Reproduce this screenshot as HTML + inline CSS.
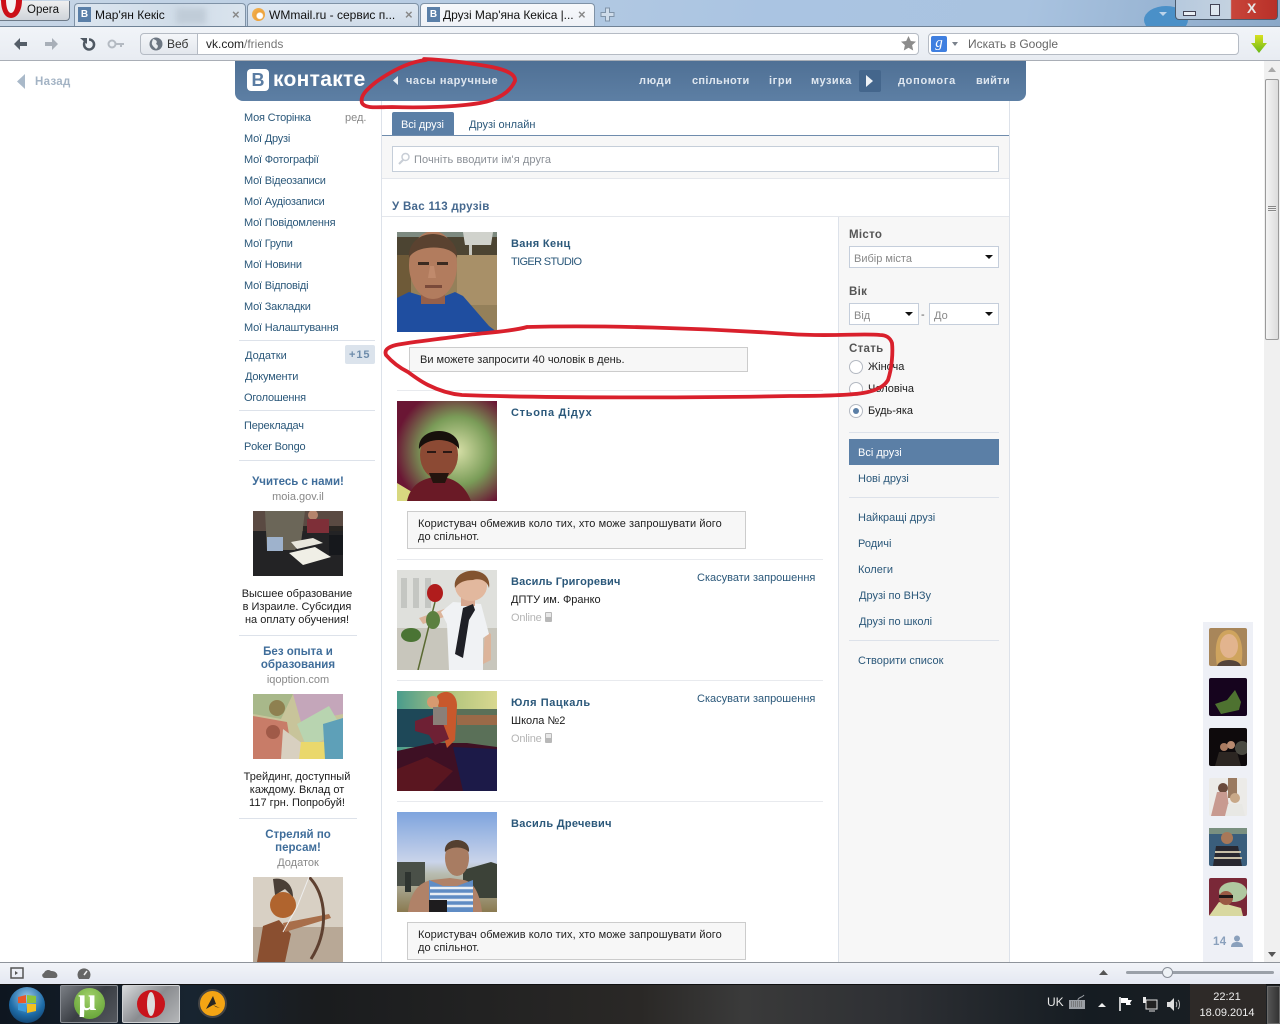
<!DOCTYPE html>
<html><head><meta charset="utf-8"><style>
html,body{margin:0;padding:0;width:1280px;height:1024px;overflow:hidden;background:#fff}
body{position:relative;font:11px "Liberation Sans","DejaVu Sans",sans-serif;color:#2b587a}
.t{position:absolute;white-space:nowrap;line-height:13px;margin-top:1px}
.a{position:absolute}
.c{text-align:center}
.b{font-weight:bold}
.m{color:#2b587a}
.l{letter-spacing:-.2px}
.k{color:#1c1c1c}
.g{color:#888}
.hd{font-weight:bold;color:#dfe7f0;font-size:11px;letter-spacing:.45px}
.nm{font-weight:bold;color:#2b587a;font-size:11px;letter-spacing:.28px}
.f{font-weight:bold;color:#555;font-size:11.5px;letter-spacing:.3px}
.sel{position:absolute;height:20px;background:#fff;border:1px solid #c5cedb;box-sizing:border-box;color:#888;padding:6px 4px 0;line-height:13px}
.sel i{position:absolute;right:5px;top:7px;border:4px solid transparent;border-top:4px solid #111;border-bottom:0}
.r{position:absolute;width:12px;height:12px;border:1px solid #b4b9c2;border-radius:50%;background:#fff}
.sep{position:absolute;height:1px;background:#dde2ea}
.msg{position:absolute;background:#f7f7f7;border:1px solid #ccc;box-sizing:border-box;color:#222;padding:6px 10px 0;line-height:13px;letter-spacing:.07px}
.ph{position:absolute;display:block}
.on{position:absolute;width:7px;height:10px;background:#b8b8b8;border-radius:1px}
.on:after{content:"";position:absolute;left:1px;top:1px;width:5px;height:4px;background:#e8e8e8}
</style></head><body>

<!-- tab strip -->
<div class="a" style="left:0;top:0;width:1280px;height:27px;background:linear-gradient(100deg,#c7d6e6 0,#b9cde3 30%,#aac4e2 60%,#a9c3e0 80%,#8aa8c8 100%)"></div>
<svg class="a" style="left:1130px;top:0" width="150" height="27"><ellipse cx="36" cy="20" rx="22" ry="14" fill="#4a90c8"/><path d="M29 12h8l-4 4z" fill="#bcd4ea"/></svg>
<div class="a" style="left:0;top:1px;width:70px;height:20px;background:linear-gradient(#f0f0f0,#cfd4da);border:1px solid #6d7a88;border-left:0;border-top:0;border-radius:0 0 4px 0;box-sizing:border-box"></div>
<svg class="a" style="left:0;top:0" width="24" height="20"><path d="M1 0h21c0 11-5 18-11 18S1 11 1 0z" fill="#cc1018"/><path d="M6 0h10c0 7-2 13-5 13S6 7 6 0z" fill="#f4f4f4"/></svg>
<!-- tabs -->
<div class="a" style="left:74px;top:3px;width:172px;height:24px;background:linear-gradient(90deg,#dce6f0,#d0dce8 60%,#dae4ee);border:1px solid #7f92a6;border-bottom:0;box-sizing:border-box;border-radius:4px 4px 0 0"></div>
<div class="a" style="left:176px;top:8px;width:30px;height:16px;background:#c0ccd8;filter:blur(3px)"></div>
<div class="a" style="left:247px;top:3px;width:172px;height:24px;background:linear-gradient(#dfe8f2,#cfdbe8);border:1px solid #7f92a6;border-bottom:0;box-sizing:border-box;border-radius:4px 4px 0 0"></div>
<div class="a" style="left:420px;top:3px;width:175px;height:25px;background:linear-gradient(#f6f8fb,#eef1f6);border:1px solid #7f92a6;border-bottom:0;box-sizing:border-box;border-radius:4px 4px 0 0"></div>
<div class="t" style="left:27px;top:3px;color:#111;font-size:11.500px">Opera</div>
<div class="a" style="left:78px;top:7px;width:13px;height:15px;background:#5a7fa8;color:#fff;font:bold 10px/15px 'Liberation Sans',sans-serif;text-align:center">B</div>
<div class="t" style="left:95px;top:8px;color:#111;font-size:12px">Мар'ян Кекіс</div>
<div class="t" style="left:232px;top:7px;color:#888;font-size:13px;font-weight:bold">×</div>
<div class="a" style="left:252px;top:8px;width:13px;height:13px;border-radius:50%;background:radial-gradient(circle at 60% 60%,#fff 0 25%,#eda23a 35%,#f3b860)"></div>
<div class="t" style="left:269px;top:8px;color:#111;font-size:12px">WMmail.ru - сервис п...</div>
<div class="t" style="left:405px;top:7px;color:#888;font-size:13px;font-weight:bold">×</div>
<div class="a" style="left:427px;top:7px;width:13px;height:15px;background:#5a7fa8;color:#fff;font:bold 10px/15px 'Liberation Sans',sans-serif;text-align:center">B</div>
<div class="t" style="left:443px;top:8px;color:#111;font-size:12px;letter-spacing:-.05px">Друзі Мар'яна Кекіса |...</div>
<div class="t" style="left:578px;top:7px;color:#888;font-size:13px;font-weight:bold">×</div>
<svg class="a" style="left:600px;top:7px" width="15" height="15"><path d="M5.500 1h4v4.500h4.500v4H9.500V14h-4V9.500H1v-4h4.500z" fill="#cfdcea" stroke="#7f93a8"/></svg>
<!-- window buttons -->
<div class="a" style="left:1175px;top:0;width:103px;height:20px;border:1px solid #4a5a6c;border-top:0;box-sizing:border-box;border-radius:0 0 4px 4px;background:linear-gradient(90deg,#b6c9de 0,#c4d2e0 54%,#c8453a 55%,#b83028 100%)"></div>
<div class="a" style="left:1183px;top:11px;width:11px;height:3px;background:#e8eef4;border:1px solid #445"></div>
<div class="a" style="left:1210px;top:4px;width:8px;height:10px;background:#dfe7ef;border:1px solid #445"></div>
<div class="t b" style="left:1247px;top:1px;color:#e6e6e6;font-size:14px">X</div>

<!-- toolbar -->
<div class="a" style="left:0;top:26px;width:1280px;height:1px;background:#6f8296"></div>
<div class="a" style="left:0;top:27px;width:1280px;height:33px;background:linear-gradient(#f1f4f8,#e8ecf2)"></div>
<div class="a" style="left:0;top:60px;width:1280px;height:1px;background:#a9aeb6"></div>
<svg class="a" style="left:10px;top:35px" width="120" height="18">
<path d="M4 9l6-6v4h7v4h-7v4z" fill="#555e68"/>
<path d="M48 9l-6-6v4h-7v4h7v4z" fill="#a8afb8"/>
<path d="M79 4.500a5 5 0 1 1-3.500 1.500" fill="none" stroke="#4f5862" stroke-width="2.500"/><path d="M70 3h7v6z" fill="#4f5862"/>
<circle cx="102" cy="9" r="3.500" fill="none" stroke="#b4bac2" stroke-width="2"/><path d="M105 8h9v2h-2v2h-2v-2h-5z" fill="#b4bac2"/>
</svg>
<div class="a" style="left:140px;top:33px;width:58px;height:22px;background:linear-gradient(#f4f6f9,#e3e7ed);border:1px solid #b5bbc4;box-sizing:border-box;border-radius:4px 0 0 4px"></div>
<div class="a" style="left:198px;top:33px;width:721px;height:22px;background:#fff;border:1px solid #b5bbc4;border-left:0;box-sizing:border-box;border-radius:0 4px 4px 0"></div>
<svg class="a" style="left:149px;top:37px" width="14" height="14"><circle cx="7" cy="7" r="6.500" fill="#6c7682"/><path d="M4 2c3 1 5 2 3 5 3 1 2 4 0 5-2-2-5-4-4-7z" fill="#e8ecf0"/></svg>
<div class="t" style="left:167px;top:37px;color:#333;font-size:12px">Веб</div>
<div class="t" style="left:206px;top:37px;color:#222;font-size:12px">vk.com<span style="color:#777">/friends</span></div>
<svg class="a" style="left:900px;top:35px" width="17" height="17"><path d="M8.500 1l2.300 5 5.200.6-3.900 3.500 1.100 5.400-4.700-2.700-4.700 2.700 1.100-5.400L1 6.600 6.200 6z" fill="#8c8c8c"/></svg>
<div class="a" style="left:928px;top:33px;width:311px;height:22px;background:#fff;border:1px solid #b5bbc4;box-sizing:border-box;border-radius:4px"></div>
<div class="a" style="left:931px;top:36px;width:16px;height:16px;background:#3f7fe0;border-radius:2px;color:#fff;font:italic 15px/15px 'Liberation Serif',serif;text-align:center">g</div>
<div class="a" style="left:952px;top:42px;border:3.500px solid transparent;border-top:4px solid #7a828c;border-bottom:0"></div>
<div class="t" style="left:968px;top:37px;color:#666;font-size:12px">Искать в Google</div>
<svg class="a" style="left:1250px;top:35px" width="18" height="19"><defs><linearGradient id="dg" x1="0" y1="0" x2="0" y2="1"><stop offset="0" stop-color="#d8e020"/><stop offset="1" stop-color="#68b818"/></linearGradient></defs><path d="M5 0h8v8h4l-8 10L1 8h4z" fill="url(#dg)"/></svg>

<!-- Back -->
<svg class="a" style="left:17px;top:74px" width="9" height="15"><path d="M8 0v15L0 7.500z" fill="#a9b9c9"/></svg>
<div class="t b" style="left:35px;top:75px;color:#a3b3c4;font-size:11.500px;letter-spacing:.3px">Назад</div>

<!-- VK header -->
<div class="a" style="left:235px;top:61px;width:791px;height:40px;background:linear-gradient(#4f7095,#5d7fa4);border-radius:0 0 8px 8px"></div>
<div class="a" style="left:247px;top:69px;width:22px;height:22px;background:#fff;border-radius:4px;color:#5b7da3;font:bold 18px/22px 'Liberation Sans',sans-serif;text-align:center">В</div>
<div class="t b" style="left:273px;top:68px;color:#fff;font-size:21px;line-height:22px;letter-spacing:.3px">контакте</div>
<svg class="a" style="left:393px;top:76px" width="6" height="9"><path d="M5 0v9L0 4.500z" fill="#e8eef4"/></svg>
<div class="t hd" style="left:406px;top:74px;letter-spacing:.55px">часы наручные</div>
<div class="t hd" style="left:639px;top:74px;letter-spacing:.7px">люди</div>
<div class="t hd" style="left:692px;top:74px;letter-spacing:.3px">спільноти</div>
<div class="t hd" style="left:769px;top:74px;letter-spacing:.6px">ігри</div>
<div class="t hd" style="left:811px;top:74px;letter-spacing:.5px">музика</div>
<div class="a" style="left:859px;top:70px;width:22px;height:22px;background:#44668c;border-radius:2px"></div>
<svg class="a" style="left:866px;top:75px" width="8" height="12"><path d="M0 0l7 6-7 6z" fill="#eef2f6"/></svg>
<div class="t hd" style="left:898px;top:74px;letter-spacing:.7px">допомога</div>
<div class="t hd" style="left:976px;top:74px;letter-spacing:.3px">вийти</div>

<!-- left menu -->
<div class="t m l" style="left:244px;top:111px">Моя Сторінка</div>
<div class="t g" style="left:345px;top:111px">ред.</div>
<div class="t m l" style="left:244px;top:132px">Мої Друзі</div>
<div class="t m l" style="left:244px;top:153px">Мої Фотографії</div>
<div class="t m l" style="left:244px;top:174px">Мої Відеозаписи</div>
<div class="t m l" style="left:244px;top:195px">Мої Аудіозаписи</div>
<div class="t m l" style="left:244px;top:216px">Мої Повідомлення</div>
<div class="t m l" style="left:244px;top:237px">Мої Групи</div>
<div class="t m l" style="left:244px;top:258px">Мої Новини</div>
<div class="t m l" style="left:244px;top:279px">Мої Відповіді</div>
<div class="t m l" style="left:244px;top:300px">Мої Закладки</div>
<div class="t m l" style="left:244px;top:321px">Мої Налаштування</div>
<div class="sep" style="left:239px;top:340px;width:136px"></div>
<div class="t m" style="left:245px;top:349px">Додатки</div>
<div class="a" style="left:345px;top:345px;width:30px;height:19px;background:#dbe3ec;border-radius:2px"></div>
<div class="t b" style="left:349px;top:348px;color:#6e8cab;font-size:11px;letter-spacing:.9px">+15</div>
<div class="t m l" style="left:245px;top:370px">Документи</div>
<div class="t m l" style="left:244px;top:391px">Оголошення</div>
<div class="sep" style="left:239px;top:410px;width:136px"></div>
<div class="t m l" style="left:244px;top:419px">Перекладач</div>
<div class="t m l" style="left:244px;top:440px">Poker Bongo</div>
<div class="sep" style="left:239px;top:460px;width:136px"></div>

<!-- ads -->
<div class="t c b" style="left:239px;top:475px;width:118px;color:#3f6d9a;font-size:11.500px">Учитесь с нами!</div>
<div class="t c g" style="left:239px;top:490px;width:118px">moia.gov.il</div>
<svg class="ph" style="left:253px;top:511px" width="90" height="65"><rect width="90" height="65" fill="#232325"/><rect width="90" height="20" fill="#5a4a42"/><rect x="50" y="15" width="40" height="5" fill="#2a2622"/><path d="M12 0h40l-4 32-6 7H14z" fill="#6b6658"/><rect x="14" y="26" width="16" height="14" fill="#9eb2cc"/><circle cx="60" cy="4" r="5" fill="#b5846c"/><rect x="54" y="8" width="22" height="14" fill="#7e2f38"/><path d="M38 31l22-4 10 5-26 6z" fill="#e8e6dc"/><path d="M36 42l26-6 16 10-28 8z" fill="#f0efe6"/><rect x="76" y="24" width="14" height="20" fill="#16181c"/></svg>
<div class="t c k" style="left:235px;top:587px;width:124px">Высшее образование<br>в Израиле. Субсидия<br>на оплату обучения!</div>
<div class="sep" style="left:239px;top:635px;width:118px"></div>
<div class="t c b" style="left:239px;top:645px;width:118px;color:#3f6d9a;font-size:11.500px">Без опыта и<br>образования</div>
<div class="t c g" style="left:239px;top:673px;width:118px">iqoption.com</div>
<svg class="ph" style="left:253px;top:694px" width="90" height="65"><rect width="90" height="65" fill="#c8c49a"/><path d="M0 0h40L28 25 0 20z" fill="#a8b88a"/><path d="M0 22l34 6 6 37H0z" fill="#c87c68"/><path d="M40 0h50v20L48 28z" fill="#c4a6ba"/><path d="M44 30l32-18 14 24-36 18z" fill="#b8d4b0"/><path d="M30 35l24 18-8 12H28z" fill="#d8d0c0"/><path d="M48 48h26l-2 17H46z" fill="#ead86c"/><path d="M70 30l20-6v41H72z" fill="#5ea0b8"/><circle cx="24" cy="14" r="8" fill="#8e8050"/><circle cx="20" cy="38" r="7" fill="#a05a48"/></svg>
<div class="t c k" style="left:235px;top:770px;width:124px">Трейдинг, доступный<br>каждому. Вклад от<br>117 грн. Попробуй!</div>
<div class="sep" style="left:239px;top:818px;width:118px"></div>
<div class="t c b" style="left:239px;top:828px;width:118px;color:#3f6d9a;font-size:11.500px">Стреляй по<br>персам!</div>
<div class="t c g" style="left:239px;top:856px;width:118px">Додаток</div>
<svg class="ph" style="left:253px;top:877px" width="90" height="85"><rect width="90" height="85" fill="#d8d0c4"/><rect y="50" width="90" height="35" fill="#b8a896"/><path d="M4 85l6-36 16-6 12 14-6 28z" fill="#8a4f30"/><circle cx="30" cy="28" r="13" fill="#b0642e"/><path d="M20 2c10-2 20 4 20 18l-8-8-10 6z" fill="#4a3f36"/><path d="M30 46l46-9 2 4-46 14z" fill="#a86e4a"/><path d="M56 0c18 18 20 54 2 82" fill="none" stroke="#5e4030" stroke-width="3"/><path d="M56 0L44 30 30 55" stroke="#eee" fill="none"/></svg>

<!-- divider of center -->
<div class="a" style="left:381px;top:101px;width:1px;height:861px;background:#dde2ea"></div>
<div class="a" style="left:1009px;top:101px;width:1px;height:861px;background:#dde2ea"></div>

<!-- tabs -->
<div class="a" style="left:392px;top:112px;width:62px;height:23px;background:#5b7fa6;border-radius:2px 2px 0 0"></div>
<div class="t" style="left:401px;top:118px;color:#fff;letter-spacing:-.1px">Всі друзі</div>
<div class="t m" style="left:469px;top:118px">Друзі онлайн</div>
<div class="a" style="left:382px;top:135px;width:627px;height:1px;background:#6f8cad"></div>
<div class="a" style="left:382px;top:136px;width:627px;height:42px;background:#f7f7f7"></div>
<div class="a" style="left:392px;top:146px;width:607px;height:26px;background:#fff;border:1px solid #c5ced9;box-sizing:border-box"></div>
<svg class="a" style="left:398px;top:152px" width="12" height="13"><circle cx="7.500" cy="5" r="3.500" fill="none" stroke="#c8ced6" stroke-width="1.500"/><path d="M5 8l-4 4" stroke="#c8ced6" stroke-width="2"/></svg>
<div class="t" style="left:414px;top:153px;color:#8a8f96;letter-spacing:.08px">Почніть вводити ім'я друга</div>
<div class="a" style="left:382px;top:178px;width:627px;height:1px;background:#e4e7ec"></div>
<div class="t b" style="left:392px;top:200px;color:#45688e;font-size:11.500px;letter-spacing:.3px">У Вас 113 друзів</div>
<div class="a" style="left:382px;top:216px;width:627px;height:1px;background:#e4e7ec"></div>

<!-- filter column -->
<div class="a" style="left:838px;top:217px;width:171px;height:745px;background:#f7f7f7;border-left:1px solid #dde2ea;box-sizing:border-box"></div>
<div class="t f" style="left:849px;top:228px">Місто</div>
<div class="sel" style="left:849px;top:246px;width:150px;height:22px">Вибір міста<i style="top:8px"></i></div>
<div class="t f" style="left:849px;top:285px">Вік</div>
<div class="sel" style="left:849px;top:303px;width:70px;height:22px">Від<i style="top:8px"></i></div>
<div class="t" style="left:921px;top:308px;color:#555">-</div>
<div class="sel" style="left:929px;top:303px;width:70px;height:22px">До<i style="top:8px"></i></div>
<div class="t f" style="left:849px;top:342px">Стать</div>
<div class="r" style="left:849px;top:360px"></div>
<div class="t k" style="left:868px;top:360px">Жіноча</div>
<div class="r" style="left:849px;top:382px"></div>
<div class="t k" style="left:868px;top:382px">Чоловіча</div>
<div class="r" style="left:849px;top:404px"></div>
<div class="a" style="left:853px;top:408px;width:6px;height:6px;border-radius:50%;background:#5b7fa6"></div>
<div class="t k" style="left:868px;top:404px">Будь-яка</div>
<div class="sep" style="left:849px;top:432px;width:150px"></div>
<div class="a" style="left:849px;top:439px;width:150px;height:26px;background:#5b7fa6"></div>
<div class="t" style="left:858px;top:446px;color:#fff">Всі друзі</div>
<div class="t m" style="left:858px;top:472px">Нові друзі</div>
<div class="sep" style="left:849px;top:497px;width:150px"></div>
<div class="t m" style="left:858px;top:511px">Найкращі друзі</div>
<div class="t m" style="left:858px;top:537px">Родичі</div>
<div class="t m" style="left:858px;top:563px">Колеги</div>
<div class="t m" style="left:859px;top:589px">Друзі по ВНЗу</div>
<div class="t m" style="left:859px;top:615px">Друзі по школі</div>
<div class="sep" style="left:849px;top:640px;width:150px"></div>
<div class="t m" style="left:858px;top:654px">Створити список</div>

<!-- friend 1 -->
<svg class="ph" style="left:397px;top:232px" width="100" height="100"><rect width="100" height="100" fill="#94805a"/><rect width="100" height="5" fill="#7d8a80"/><rect y="5" width="100" height="18" fill="#4c4432"/><path d="M66 0h30l-2 13H68z" fill="#d0d2cc"/><rect x="72" y="13" width="3" height="12" fill="#c8c8c0"/><rect y="23" x="60" width="40" height="50" fill="#a89068"/><rect x="0" y="23" width="14" height="45" fill="#6e5a38"/><path d="M0 66l12-6 26 8 20-8 8 4 26 30 8 6H0z" fill="#1f4ea0"/><rect x="24" y="58" width="24" height="14" fill="#96604a"/><ellipse cx="36" cy="33" rx="24" ry="34" fill="#b27c5e"/><path d="M12 26C10 -6 62 -6 60 26 56 12 18 12 12 26z" fill="#5a4230"/><rect x="21" y="30" width="11" height="3" fill="#3a2a20"/><rect x="40" y="30" width="11" height="3" fill="#3a2a20"/><path d="M33 34l-2 12h8l-2-12z" fill="#c08a6c"/><rect x="28" y="53" width="17" height="3" fill="#7a4a3a"/></svg>
<div class="t nm" style="left:511px;top:237px;letter-spacing:.35px">Ваня Кенц</div>
<div class="t m" style="left:511px;top:255px;letter-spacing:-.65px">TIGER STUDIO</div>
<div class="msg" style="left:409px;top:347px;width:339px;height:25px;letter-spacing:0">Ви можете запросити 40 чоловік в день.</div>
<div class="sep" style="left:397px;top:390px;width:426px;background:#e8eaee"></div>

<!-- friend 2 -->
<svg class="ph" style="left:397px;top:401px" width="100" height="100"><defs><radialGradient id="f2" cx=".6" cy=".5" r=".62"><stop offset="0" stop-color="#d8e0a8"/><stop offset=".55" stop-color="#7a9c58"/><stop offset="1" stop-color="#6a1634"/></radialGradient></defs><rect width="100" height="100" fill="url(#f2)"/><path d="M0 82l30 18H0z" fill="#d8d880"/><ellipse cx="42" cy="54" rx="19" ry="24" fill="#8c4a34"/><path d="M22 48C20 24 64 24 62 48 54 36 30 36 22 48z" fill="#17100c"/><rect x="30" y="50" width="9" height="2" fill="#2a1814"/><rect x="46" y="50" width="9" height="2" fill="#2a1814"/><path d="M10 100c4-18 18-24 32-24s26 8 32 24z" fill="#6a1a26"/><path d="M32 72h20l-4 10h-12z" fill="#24140e"/></svg>
<div class="t nm" style="left:511px;top:406px;letter-spacing:.7px">Стьопа Дідух</div>
<div class="msg" style="left:407px;top:511px;width:339px;height:38px">Користувач обмежив коло тих, хто може запрошувати його<br>до спільнот.</div>
<div class="sep" style="left:397px;top:559px;width:426px;background:#e8eaee"></div>

<!-- friend 3 -->
<svg class="ph" style="left:397px;top:570px" width="100" height="100"><rect width="100" height="100" fill="#dfe0dc"/><path d="M4 8h6v30H4zM16 8h6v30h-6zM28 8h6v30h-6z" fill="#c4c6c2"/><rect y="58" width="100" height="42" fill="#c8c6bc"/><path d="M88 60l6 4 0 26-8 4z" fill="#dcb49a"/><path d="M22 48l28-10 0 8-24 8z" fill="#dcb49a"/><path d="M56 32l28 2 8 30-6 4 0 32H52l-2-46-6-12z" fill="#f0f2f4"/><rect x="64" y="24" width="14" height="12" fill="#d8a890"/><ellipse cx="74" cy="16" rx="16" ry="15" fill="#e2b89e"/><path d="M58 18C54-4 96-6 92 18c-2-8-10-10-16-8-8 0-14 2-18 8z" fill="#82532f"/><path d="M66 38l10-4 2 6-6 10-6 38-8-4z" fill="#1f2026"/><ellipse cx="38" cy="23" rx="8" ry="9" fill="#b01c1c"/><path d="M38 32L21 100" stroke="#5a6a32" stroke-width="1.500"/><ellipse cx="14" cy="65" rx="10" ry="7" fill="#4a7434"/><ellipse cx="36" cy="50" rx="7" ry="9" fill="#5c8040"/></svg>
<div class="t nm" style="left:511px;top:575px;letter-spacing:.15px">Василь Григоревич</div>
<div class="t k" style="left:511px;top:593px">ДПТУ им. Франко</div>
<div class="t" style="left:511px;top:611px;color:#b5b5b5;letter-spacing:-.2px">Online</div>
<div class="on" style="left:545px;top:612px"></div>
<div class="t m" style="left:697px;top:571px">Скасувати запрошення</div>
<div class="sep" style="left:397px;top:680px;width:426px;background:#e8eaee"></div>

<!-- friend 4 -->
<svg class="ph" style="left:397px;top:691px" width="100" height="100"><defs><linearGradient id="f4" x1="0" y1="0" x2="1" y2="0"><stop offset="0" stop-color="#4a9c8c"/><stop offset=".6" stop-color="#b8c880"/><stop offset="1" stop-color="#d8d890"/></linearGradient></defs><rect width="100" height="100" fill="url(#f4)"/><path d="M0 18h100v38H0z" fill="#5a7058"/><path d="M0 18h40v38H0z" fill="#1e4858"/><path d="M60 24h40v10H60z" fill="#9a6a48"/><path d="M0 60l36-8h34l30 4v44H0z" fill="#3e1024"/><path d="M56 56l44 2v42H66z" fill="#1c1a48"/><path d="M0 78l30-12 26 14-20 20H0z" fill="#5a1620"/><path d="M40 5c8-8 20-4 20 10l-2 34-8 8-6-20z" fill="#c8582c"/><path d="M18 30l24-8 10 26-14 6-6-10-14-4z" fill="#6e2034"/><circle cx="36" cy="11" r="6" fill="#d89a70"/><rect x="36" y="16" width="14" height="18" fill="#8a7f78"/></svg>
<div class="t nm" style="left:511px;top:696px;letter-spacing:.55px">Юля Пацкаль</div>
<div class="t k" style="left:511px;top:714px">Школа №2</div>
<div class="t" style="left:511px;top:732px;color:#b5b5b5;letter-spacing:-.2px">Online</div>
<div class="on" style="left:545px;top:733px"></div>
<div class="t m" style="left:697px;top:692px">Скасувати запрошення</div>
<div class="sep" style="left:397px;top:801px;width:426px;background:#e8eaee"></div>

<!-- friend 5 -->
<svg class="ph" style="left:397px;top:812px" width="100" height="100"><defs><linearGradient id="f5" x1="0" y1="0" x2="0" y2="1"><stop offset="0" stop-color="#7ea4de"/><stop offset=".5" stop-color="#cad4ea"/><stop offset=".62" stop-color="#b8bcb0"/><stop offset="1" stop-color="#8a7a50"/></linearGradient></defs><rect width="100" height="100" fill="url(#f5)"/><rect x="0" y="50" width="28" height="24" fill="#4a5048"/><path d="M66 58l28-8 6 2v34H66z" fill="#3c4238"/><rect x="8" y="60" width="6" height="20" fill="#2e3430"/><ellipse cx="60" cy="46" rx="12" ry="18" fill="#a87c62"/><path d="M48 40c-2-16 26-16 24 0-6-6-18-6-24 0z" fill="#544030"/><path d="M11 100c2-18 10-30 24-32l18-2 14 2c10 2 16 14 18 32z" fill="#b08268"/><path d="M32 100V68l14 6h14l16-6v32z" fill="#5f8cc4"/><path d="M33 76h43M33 82h43M33 88h43M33 94h43" stroke="#e8eef4" stroke-width="2.500"/><rect x="32" y="88" width="18" height="12" fill="#1e1c1e"/></svg>
<div class="t nm" style="left:511px;top:817px">Василь Дречевич</div>
<div class="msg" style="left:407px;top:922px;width:339px;height:38px">Користувач обмежив коло тих, хто може запрошувати його<br>до спільнот.</div>

<!-- right chat bar -->
<div class="a" style="left:1203px;top:622px;width:50px;height:340px;background:#eef0f6"></div>
<svg class="a" style="left:1209px;top:628px" width="38" height="38"><rect width="38" height="38" rx="2" fill="#a8865a"/><path d="M8 38C4 14 10 2 20 2s16 14 12 36z" fill="#cfa45e"/><ellipse cx="20" cy="18" rx="9" ry="12" fill="#e2b48e"/><path d="M8 38c2-8 22-8 24 0z" fill="#54443a"/></svg>
<svg class="a" style="left:1209px;top:678px" width="38" height="38"><rect width="38" height="38" rx="2" fill="#16041e"/><path d="M6 26l12-4 8-10 6 12-2 8-18 4z" fill="#4e7230"/></svg>
<svg class="a" style="left:1209px;top:728px" width="38" height="38"><rect width="38" height="38" rx="2" fill="#0e0a0c"/><circle cx="15" cy="19" r="4" fill="#a87a60"/><circle cx="22" cy="17" r="4" fill="#b88a70"/><path d="M6 38l4-14 18 0 4 14z" fill="#2c2622"/><circle cx="33" cy="20" r="7" fill="#4a4a42"/></svg>
<svg class="a" style="left:1209px;top:778px" width="38" height="38"><rect width="38" height="38" rx="2" fill="#ecebe8"/><rect x="19" width="9" height="20" fill="#9a7a60"/><circle cx="14" cy="10" r="5" fill="#6a4a3c"/><path d="M2 38l6-24 10 0 3 24z" fill="#c89a90"/><circle cx="26" cy="20" r="5" fill="#c8a888"/><path d="M16 38l3-12h14l3 12z" fill="#e8e8e4"/></svg>
<svg class="a" style="left:1209px;top:828px" width="38" height="38"><rect width="38" height="38" rx="2" fill="#3a5e7c"/><rect width="38" height="6" fill="#7a9080"/><circle cx="18" cy="10" r="6" fill="#a87858"/><path d="M4 38l3-20 22 0 4 20z" fill="#282830"/><path d="M6 24h26M5 30h28" stroke="#c8c0a8" stroke-width="2"/></svg>
<svg class="a" style="left:1209px;top:878px" width="38" height="38"><rect width="38" height="38" rx="2" fill="#7a2838"/><ellipse cx="24" cy="14" rx="14" ry="10" fill="#b0c8a0"/><path d="M0 38l10-14 22 6 2 8z" fill="#d8d8a0"/><circle cx="17" cy="20" r="7" fill="#9a5a44"/><rect x="10" y="17" width="14" height="3" fill="#201818"/></svg>
<div class="t b" style="left:1213px;top:935px;color:#8aa0bc;font-size:11.500px;letter-spacing:.3px">14</div>
<svg class="a" style="left:1231px;top:935px" width="12" height="12"><circle cx="6" cy="3.500" r="3" fill="#8aa0bc"/><path d="M0 12c0-4 3-5 6-5s6 1 6 5z" fill="#8aa0bc"/></svg>

<!-- scrollbar -->
<div class="a" style="left:1264px;top:61px;width:16px;height:901px;background:#f0f0f0"></div>
<svg class="a" style="left:1267px;top:66px" width="10" height="8"><path d="M5 1l4 5H1z" fill="#a8a8a8"/></svg>
<div class="a" style="left:1265px;top:79px;width:14px;height:261px;background:linear-gradient(90deg,#f4f4f4,#dcdcdc);border:1px solid #9a9a9a;box-sizing:border-box;border-radius:2px"></div>
<div class="a" style="left:1268px;top:206px;width:8px;height:6px;background:repeating-linear-gradient(#888 0 1px,#eee 1px 2px)"></div>
<svg class="a" style="left:1267px;top:950px" width="10" height="8"><path d="M5 7l4-5H1z" fill="#555"/></svg>

<!-- status bar -->
<div class="a" style="left:0;top:962px;width:1280px;height:1px;background:#8f949b"></div>
<div class="a" style="left:0;top:963px;width:1280px;height:21px;background:linear-gradient(#f2f4f8,#e4e8f2)"></div>
<svg class="a" style="left:10px;top:966px" width="90" height="15">
<rect x="1" y="2" width="12" height="10" fill="none" stroke="#555" stroke-width="1.500"/><path d="M5 5l3 2-3 2z" fill="#555"/>
<path d="M35 12c-3 0-4-4-1-5 1-3 5-4 7-2 3 0 5 1 6 3 1 2 0 4-2 4z" fill="#666"/>
<path d="M69 13a6.500 6.500 0 1 1 10 0z" fill="#666"/><path d="M74 9l3-4" stroke="#eee" stroke-width="1.500"/>
</svg>
<svg class="a" style="left:1098px;top:969px" width="12" height="8"><path d="M1 6h9L5.500 1z" fill="#555"/></svg>
<div class="a" style="left:1126px;top:971px;width:148px;height:3px;background:#9aa0a8;border-radius:2px"></div>
<div class="a" style="left:1162px;top:967px;width:9px;height:9px;border-radius:50%;background:#eef2f6;border:1px solid #8a8f98"></div>

<!-- taskbar -->
<div class="a" style="left:0;top:984px;width:1280px;height:40px;background:linear-gradient(90deg,#0e1620 0,#182430 15%,#1a1c1e 25%,#2a2826 50%,#3a3a3a 58%,#2e3034 70%,#151c22 85%,#1c2024 100%)"></div>
<div class="a" style="left:0;top:984px;width:1280px;height:1px;background:#111"></div>
<div class="a" style="left:9px;top:987px;width:36px;height:36px;border-radius:50%;background:radial-gradient(circle at 50% 30%,#9cc8e8,#1e6ca8 55%,#0c2c50)"></div>
<svg class="a" style="left:17px;top:994px" width="20" height="20"><path d="M1 3l8-2v8H1z" fill="#e8582a"/><path d="M10 1l9 1v7h-9z" fill="#8cc43c"/><path d="M1 10h8v8l-8-2z" fill="#3c9cdc"/><path d="M10 10h9v7l-9 2z" fill="#f4c020"/></svg>
<div class="a" style="left:60px;top:985px;width:58px;height:38px;background:linear-gradient(135deg,#7a7e84,#3a3e44 50%,#54585e);border:1px solid #8a8e94;box-sizing:border-box;border-radius:2px"></div>
<div class="a" style="left:74px;top:988px;width:31px;height:31px;border-radius:50%;background:radial-gradient(circle at 50% 30%,#a0d068,#5c9c30)"></div>
<div class="t b" style="left:78px;top:983px;color:#fff;font:bold 32px/30px 'Liberation Serif',serif">µ</div>
<div class="a" style="left:122px;top:985px;width:58px;height:38px;background:linear-gradient(135deg,#d8dadc,#8a8c90 50%,#b4b6b8);border:1px solid #d0d2d4;box-sizing:border-box;border-radius:2px"></div>
<div class="a" style="left:137px;top:990px;width:28px;height:28px;border-radius:50%;background:#c8141c"></div>
<div class="a" style="left:147px;top:992px;width:8px;height:24px;border-radius:50%;background:#ddd"></div>
<div class="a" style="left:198px;top:989px;width:29px;height:29px;border-radius:50%;background:#f4a414;border:2px solid #444;box-sizing:border-box"></div>
<svg class="a" style="left:204px;top:994px" width="18" height="18"><path d="M9 2L2 15l7-4 7 3-4-1-3-2 3-1z" fill="#2a2620"/></svg>
<div class="t" style="left:1047px;top:995px;color:#e8e8e8;font-size:12px">UK</div>
<svg class="a" style="left:1068px;top:994px" width="18" height="16"><rect x="1" y="6" width="16" height="9" fill="#9a9ea4"/><path d="M3 8h12M3 10h12M3 12h12" stroke="#555" stroke-width="1" stroke-dasharray="1 1"/><path d="M10 6c0-3 4-2 6-5" stroke="#9a9ea4" fill="none"/></svg>
<svg class="a" style="left:1097px;top:1002px" width="10" height="6"><path d="M1 5h8L5 1z" fill="#eee"/></svg>
<svg class="a" style="left:1118px;top:996px" width="16" height="16"><path d="M2 1v14" stroke="#fff" stroke-width="1.500"/><path d="M3 2h7v2h4l-2 3 1 2H8V7H3z" fill="#fff"/></svg>
<svg class="a" style="left:1142px;top:996px" width="16" height="16"><rect x="4" y="4" width="11" height="9" fill="#222" stroke="#e0e0e0"/><rect x="1" y="1" width="3" height="6" fill="#e8e8e8"/><path d="M7 15h6" stroke="#e0e0e0"/></svg>
<svg class="a" style="left:1166px;top:997px" width="16" height="15"><path d="M1 5h3l4-4v13l-4-4H1z" fill="#dedede"/><path d="M10 5c1 1 1 4 0 5M12 3c2 2 2 7 0 9" stroke="#bbb" fill="none"/></svg>
<div class="a" style="left:1190px;top:984px;width:76px;height:40px;background:#2e2a28"></div>
<div class="t c" style="left:1190px;top:990px;width:74px;color:#eee;font-size:11px">22:21</div>
<div class="t c" style="left:1190px;top:1006px;width:74px;color:#eee;font-size:11px">18.09.2014</div>
<div class="a" style="left:1267px;top:986px;width:13px;height:38px;background:linear-gradient(90deg,#555,#333);border:1px solid #6a6a6a;box-sizing:border-box"></div>

<!-- red annotations -->
<svg class="a" style="left:0;top:0;pointer-events:none" width="1280" height="1024">
<path d="M426 60C408 62 390 72 376 82C366 90 360 96 362 103C365 109 378 107 392 107C420 108 456 107 480 103C498 100 510 92 515 81C516 74 506 70 492 67C470 63 448 60 424 59" fill="none" stroke="#d9202c" stroke-width="3.800" stroke-linecap="round"/>
<path d="M527 327C510 332 480 333 468 335C440 339 410 342 396 345C388 347 384 350 386 355C392 362 400 368 408 372C416 378 422 382 428 385C440 391 450 394 462 395C540 398 700 398 790 396C820 396 850 395 863 393C875 391 884 387 888 380C892 368 893 352 892 343C890 337 885 335 880 335C860 333 830 337 790 334C700 328 600 325 527 327" fill="none" stroke="#d9202c" stroke-width="3.800" stroke-linecap="round"/>
</svg>
</body></html>
